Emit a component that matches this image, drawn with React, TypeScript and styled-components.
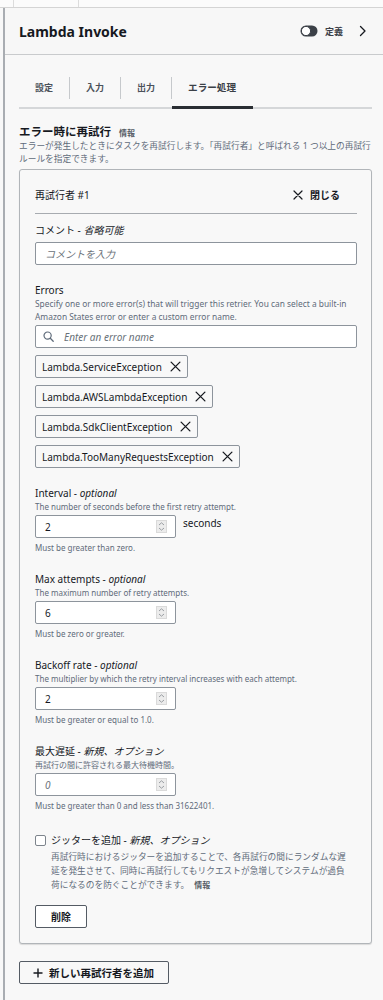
import styled, { createGlobalStyle, css } from "styled-components"

const GlobalStyle = createGlobalStyle`
  * { box-sizing: border-box; }
  body {
    margin: 0;
    background: #f8f8f8;
    color: #16191f;
    font-family: "Noto Sans", "Noto Sans CJK JP", sans-serif;
  }
`

const CloseIcon = ({ size = 10 }: { size?: number }) => (
  <svg width={size} height={size} viewBox="0 0 10 10" fill="none">
    <path d="M1 1 L9 9 M9 1 L1 9" stroke="#16191f" strokeWidth="1.2" strokeLinecap="round" />
  </svg>
)

const SearchIcon = () => (
  <svg width="11" height="11" viewBox="0 0 11 11" fill="none">
    <circle cx="4.6" cy="4.6" r="3.6" stroke="#5f6b7a" strokeWidth="1.2" />
    <path d="M7.3 7.3 L10.2 10.2" stroke="#5f6b7a" strokeWidth="1.3" strokeLinecap="round" />
  </svg>
)

const Stepper = () => (
  <svg width="11" height="13" viewBox="0 0 11 13" fill="none">
    <rect x="0.5" y="0.5" width="10" height="12" fill="#ececec" stroke="#dadada" />
    <path d="M3 5 L5.5 2.8 L8 5" stroke="#9a9ea3" strokeWidth="1" />
    <path d="M3 8 L5.5 10.2 L8 8" stroke="#9a9ea3" strokeWidth="1" />
  </svg>
)

const Toggle = () => (
  <svg width="18" height="12" viewBox="0 0 18 12">
    <rect x="0.5" y="0.5" width="17" height="11" rx="5.5" fill="#3b4047" />
    <circle cx="6" cy="6" r="4.6" fill="#fff" stroke="#3b4047" strokeWidth="1" />
  </svg>
)

const Chevron = () => (
  <svg width="8" height="12" viewBox="0 0 8 12" fill="none">
    <path d="M1.5 1.5 L6 6 L1.5 10.5" stroke="#16191f" strokeWidth="1.3" strokeLinecap="round" strokeLinejoin="round" />
  </svg>
)

const PlusIcon = () => (
  <svg width="10" height="10" viewBox="0 0 10 10" fill="none">
    <path d="M5 0.5 V9.5 M0.5 5 H9.5" stroke="#16191f" strokeWidth="1.4" />
  </svg>
)

const errors = [
  "Lambda.ServiceException",
  "Lambda.AWSLambdaException",
  "Lambda.SdkClientException",
  "Lambda.TooManyRequestsException",
]

type NumberFieldProps = {
  label: string
  optional: string
  desc: string
  value: string
  helper: string
  unit?: string
  placeholder?: boolean
}

const NumberField = ({ label, optional, desc, value, helper, unit, placeholder }: NumberFieldProps) => (
  <Field>
    <Label>{label} - <em>{optional}</em></Label>
    <FieldDesc>{desc}</FieldDesc>
    <InputRow>
      <InputBox $width="141px">
        <InputText $placeholder={placeholder}>{value}</InputText>
        <Stepper />
      </InputBox>
      {unit && <Unit>{unit}</Unit>}
    </InputRow>
    <Helper>{helper}</Helper>
  </Field>
)

export default function App() {
  return (<>
    <GlobalStyle />
    <TopStrip>
      <StripCell />
    </TopStrip>
    <Panel>
      <Header>
        <Title>Lambda Invoke</Title>
        <HeaderActions>
          <Toggle />
          <HeaderLink>定義</HeaderLink>
          <Chevron />
        </HeaderActions>
      </Header>

      <Body>
        <TabList>
          <Tab>設定</Tab>
          <Tab>入力</Tab>
          <Tab>出力</Tab>
          <Tab $active>エラー処理</Tab>
        </TabList>

        <SectionTitle>エラー時に再試行 <Info>情報</Info></SectionTitle>
        <Desc $size="8.7px">エラーが発生したときにタスクを再試行します。「再試行者」と呼ばれる 1 つ以上の再試行ルールを指定できます。</Desc>

        <RetrierBox>
          <RetrierHeader>
            <span>再試行者 #1</span>
            <CloseButton><CloseIcon /> 閉じる</CloseButton>
          </RetrierHeader>

          <Field $first>
            <Label $spaced>コメント - <em>省略可能</em></Label>
            <InputBox>
              <InputText $placeholder>コメントを入力</InputText>
            </InputBox>
          </Field>

          <Field>
            <Label>Errors</Label>
            <FieldDesc $size="8.4px">Specify one or more error(s) that will trigger this retrier. You can select a built-in Amazon States error or enter a custom error name.</FieldDesc>
            <InputBox $gap="8px">
              <SearchIcon />
              <InputText $placeholder>Enter an error name</InputText>
            </InputBox>
            <TokenList>
              {errors.map(e => (
                <Token key={e}>
                  {e}
                  <CloseIcon size={11} />
                </Token>
              ))}
            </TokenList>
          </Field>

          <NumberField
            label="Interval"
            optional="optional"
            desc="The number of seconds before the first retry attempt."
            value="2"
            unit="seconds"
            helper="Must be greater than zero."
          />
          <NumberField
            label="Max attempts"
            optional="optional"
            desc="The maximum number of retry attempts."
            value="6"
            helper="Must be zero or greater."
          />
          <NumberField
            label="Backoff rate"
            optional="optional"
            desc="The multiplier by which the retry interval increases with each attempt."
            value="2"
            helper="Must be greater or equal to 1.0."
          />
          <NumberField
            label="最大遅延"
            optional="新規、オプション"
            desc="再試行の間に許容される最大待機時間。"
            value="0"
            placeholder
            helper="Must be greater than 0 and less than 31622401."
          />

          <CheckField>
            <CheckRow>
              <Checkbox />
              <Label>ジッターを追加 - <em>新規、オプション</em></Label>
            </CheckRow>
            <CheckDesc>
              <span>再試行時におけるジッターを追加することで、各再試行の間にランダムな遅延を発生させて、同時に再試行してもリクエストが急増してシステムが過負荷になるのを防ぐことができます。</span>
              <Info>情報</Info>
            </CheckDesc>
          </CheckField>

          <Button>削除</Button>
        </RetrierBox>

        <AddButton><PlusIcon /> 新しい再試行者を追加</AddButton>
      </Body>
    </Panel>
  </>)
}

const TopStrip = styled.div`
  height: 8px;
  border-bottom: 1px solid #d4d4d4;
  background: #fbfbfb;
  padding-left: 13px;
  display: flex;
`

const StripCell = styled.div`
  width: 66px;
  border-left: 1px solid #dcdcdc;
  border-right: 1px solid #dcdcdc;
`

const Panel = styled.div`
  margin-left: 3px;
  border-left: 2px solid #a9adb2;
  min-height: 992px;
`

const Header = styled.header`
  height: 47px;
  border-bottom: 1px solid #c9cbcd;
  background: #f7f7f7;
  display: flex;
  align-items: center;
  justify-content: space-between;
  padding: 0 16px 0 14px;
`

const Title = styled.h1`
  margin: 0;
  font-size: 14px;
  font-weight: 700;
  color: #16191f;
`

const HeaderActions = styled.div`
  display: flex;
  align-items: center;
  gap: 7px;
`

const HeaderLink = styled.span`
  font-size: 9px;
  font-weight: 700;
  color: #3b4047;
  margin-right: 9px;
`

const Body = styled.main`
  padding: 0 11px 0 14px;
`

const TabList = styled.nav`
  display: flex;
  margin-top: 22px;
  padding-bottom: 8px;
  border-bottom: 2px solid #d5d7d9;
`

const Tab = styled.div<{ $active?: boolean }>`
  position: relative;
  padding: 0 16px;
  line-height: 22px;
  font-size: 9px;
  font-weight: 700;
  color: #4b525a;

  & + & {
    border-left: 1px solid #c6c9cc;
  }

  ${p => p.$active && css`
    font-size: 9.6px;
    padding-right: 17px;
    color: #3b4047;
    &::after {
      content: "";
      position: absolute;
      left: 0;
      right: 0;
      bottom: -10px;
      height: 3px;
      background: #2a2e33;
    }
  `}
`

const SectionTitle = styled.h2`
  margin: 15px 0 0;
  font-size: 11.5px;
  line-height: 16px;
  font-weight: 700;
  color: #16191f;
`

const Info = styled.span`
  display: inline-block;
  line-height: 1;
  font-size: 8px;
  font-weight: 700;
  color: #545b64;
  margin-left: 5px;
`

const Desc = styled.p<{ $size?: string }>`
  margin: 0;
  font-size: ${p => p.$size || "8px"};
  line-height: 13px;
  color: #5f6b7a;
`

const RetrierBox = styled.section`
  margin-top: 3px;
  border: 1px solid #b1b5b9;
  border-radius: 3px;
  background: #f8f8f8;
  box-shadow: 0 1px 1px rgba(0, 0, 0, 0.12);
  padding: 0 14px 15px 15px;
`

const RetrierHeader = styled.div`
  display: flex;
  align-items: center;
  justify-content: space-between;
  padding: 17px 0 10px;
  line-height: 16px;
  font-size: 10px;
  border-bottom: 1px solid #a7abb0;
`

const CloseButton = styled.span`
  display: flex;
  align-items: center;
  gap: 7px;
  font-weight: 700;
  margin-right: 17px;
`

const Field = styled.div<{ $first?: boolean }>`
  margin-top: ${p => (p.$first ? "9px" : "18px")};
`

const Label = styled.div<{ $spaced?: boolean }>`
  font-size: 10px;
  line-height: 14px;
  color: #16191f;
  margin-bottom: ${p => (p.$spaced ? "5px" : "0")};

  em {
    font-style: italic;
  }
`

const FieldDesc = styled.div<{ $size?: string }>`
  font-size: ${p => p.$size || "8px"};
  line-height: 13px;
  color: #5f6b7a;
  margin-bottom: 2px;
`

const InputRow = styled.div`
  display: flex;
  align-items: flex-start;
`

const InputBox = styled.div<{ $width?: string; $gap?: string }>`
  width: ${p => p.$width || "100%"};
  height: 23px;
  background: #fff;
  border: 1px solid #8d949c;
  border-radius: 2px;
  display: flex;
  align-items: center;
  justify-content: space-between;
  gap: ${p => p.$gap || "0"};
  padding: 0 8px 0 7px;
`

const InputText = styled.span<{ $placeholder?: boolean }>`
  flex: 1;
  font-size: 10px;
  color: ${p => (p.$placeholder ? "#687078" : "#16191f")};
  font-style: ${p => (p.$placeholder ? "italic" : "normal")};
  padding-left: 2px;
`

const Unit = styled.span`
  font-size: 10px;
  line-height: 14px;
  margin-left: 7px;
  padding-top: 1px;
`

const Helper = styled.div`
  margin-top: 4px;
  font-size: 8px;
  line-height: 12px;
  color: #5f6b7a;
`

const TokenList = styled.div`
  display: flex;
  flex-direction: column;
  align-items: flex-start;
  gap: 7px;
  margin: 7px 0 2px;
`

const Token = styled.div`
  height: 23px;
  display: flex;
  align-items: center;
  gap: 8px;
  padding: 0 6px;
  border: 1px solid #8d949c;
  border-radius: 2px;
  background: #f8f8f8;
  font-size: 10px;
`

const CheckField = styled.div`
  margin-top: 21px;
`

const CheckRow = styled.div`
  display: flex;
  align-items: center;
  gap: 5px;
`

const Checkbox = styled.span`
  width: 11px;
  height: 11px;
  border: 1px solid #7d848c;
  border-radius: 2px;
  background: #fff;
`

const CheckDesc = styled.p`
  margin: 3px 0 0;
  padding-left: 16px;
  max-width: 318px;
  font-size: 8.7px;
  line-height: 14px;
  color: #5f6b7a;
`

const Button = styled.button`
  margin-top: 13px;
  height: 23px;
  padding: 0 15px;
  border: 1px solid #545b64;
  border-radius: 2px;
  background: #fff;
  font-family: inherit;
  font-size: 10px;
  font-weight: 700;
  color: #16191f;
  display: flex;
  align-items: center;
  gap: 6px;
`

const AddButton = styled(Button)`
  margin-top: 17px;
  padding: 0 14px 0 13px;
  font-size: 10.5px;
  background: #f8f8f8;
`
